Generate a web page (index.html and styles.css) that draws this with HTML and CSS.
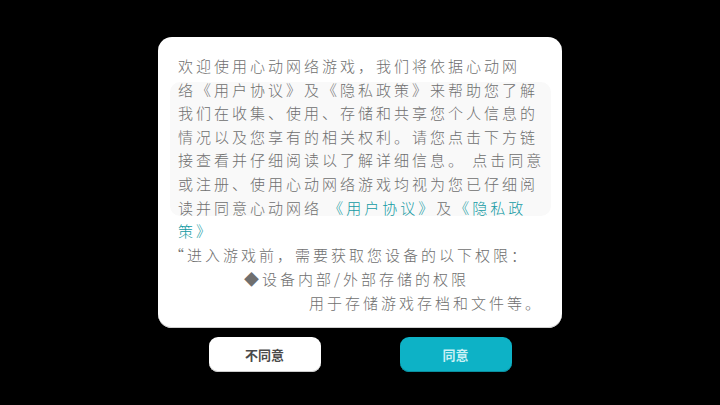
FILE: index.html
```html
<!DOCTYPE html>
<html lang="zh-CN">
<head>
    <meta charset="UTF-8">
    <meta name="viewport" content="width=device-width, initial-scale=1.0">
    <title>用户协议</title>
    <link rel="stylesheet" href="styles.css">
</head>
<body>
    <main class="screen">
        <section class="card">
            <div class="panel"></div>
            <div class="policy">
                <p>欢迎使用心动网络游戏，我们将依据心动网</p>
                <p>络《用户协议》及《隐私政策》来帮助您了解</p>
                <p>我们在收集、使用、存储和共享您个人信息的</p>
                <p>情况以及您享有的相关权利。请您点击下方链</p>
                <p>接查看并仔细阅读以了解详细信息。 点击同意</p>
                <p>或注册、使用心动网络游戏均视为您已仔细阅</p>
                <p>读并同意心动网络 <a href="#">《用户协议》</a>及<a href="#">《隐私政</a></p>
                <p><a href="#">策》</a></p>
            </div>
            <div class="perms">
                <p class="perm-lead">“进入游戏前，需要获取您设备的以下权限：</p>
                <p class="perm-item">◆设备内部/外部存储的权限</p>
                <p class="perm-note">用于存储游戏存档和文件等。</p>
            </div>
        </section>
        <div class="actions">
            <button class="btn">不同意</button>
            <button class="btn btn-primary">同意</button>
        </div>
    </main>
</body>
</html>
```

FILE: styles.css
```css
* {
    margin: 0;
    padding: 0;
    box-sizing: border-box;
}

body {
    background: #000000;
    font-family: "Noto Sans CJK SC", "Noto Sans", sans-serif;
    overflow: hidden;
}

.screen {
    width: 720px;
    height: 405px;
    display: flex;
    flex-direction: column;
    align-items: center;
    padding-top: 37px;
}

.card {
    position: relative;
    width: 404px;
    height: 291px;
    background: #ffffff;
    border-radius: 14px;
    box-shadow: inset 0 -1px 0 #cfcfcf;
    padding: 17px 10px 0 20px;
    color: #6f6f6f;
    font-size: 15px;
    font-weight: 300;
    letter-spacing: 3px;
    line-height: 24px;
    white-space: nowrap;
}

.panel {
    position: absolute;
    top: 45px;
    left: 12px;
    width: 381px;
    height: 134px;
    background: #f9f9f9;
    border-radius: 10px;
}

.policy,
.perms {
    position: relative;
}

.policy {
    line-height: 23.6px;
}

.policy a {
    color: #129aa3;
    text-decoration: none;
}

.perm-lead {
    margin-left: -9px;
}

.perm-item {
    padding-left: 66px;
}

.perm-note {
    padding-left: 131px;
}

.actions {
    display: flex;
    gap: 79px;
    margin-top: 9px;
}

.btn {
    width: 112px;
    height: 35px;
    border: none;
    border-radius: 9px;
    background: #ffffff;
    color: #4a4a4a;
    font-family: inherit;
    font-size: 13px;
    font-weight: 700;
    box-shadow: inset 0 -1px 0 #cccccc;
}

.btn-primary {
    background: #0db2c6;
    color: #c9f1f5;
    box-shadow: inset 0 -1px 0 #0a8f9f;
}
```
